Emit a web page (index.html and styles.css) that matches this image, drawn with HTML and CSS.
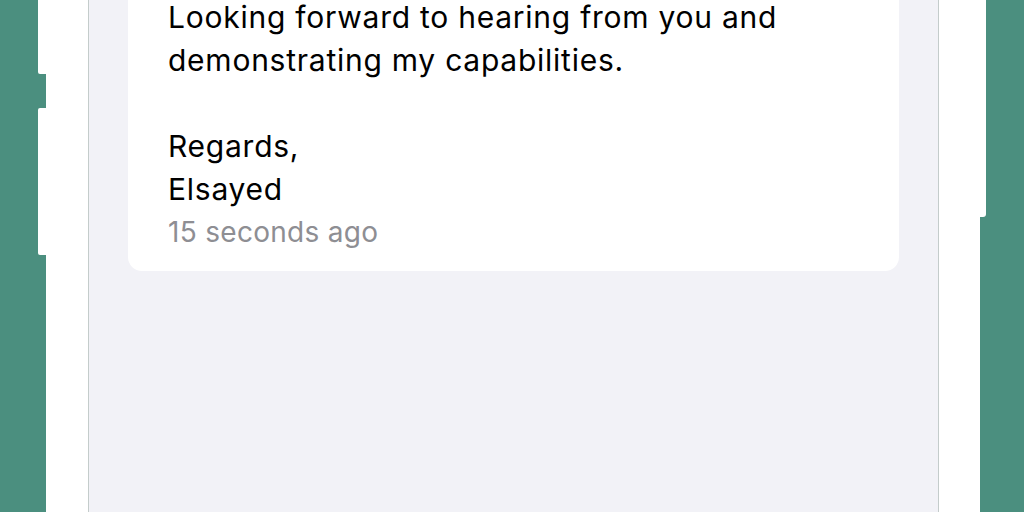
FILE: index.html
```html
<!DOCTYPE html>
<html>
<head>
  <title>Message</title>
  <link rel="stylesheet" href="styles.css">
</head>
<body>
  <div class="edge-left"></div>
  <div class="rail rail-left">
    <div class="seg seg-top"></div>
    <div class="seg seg-gap"></div>
    <div class="seg seg-mid"></div>
  </div>
  <div class="frame">
    <div class="screen">
      <div class="card">
        <p class="line">Looking forward to hearing from you and</p>
        <p class="line">demonstrating my capabilities.</p>
        <p class="line">&nbsp;</p>
        <p class="line">Regards,</p>
        <p class="line">Elsayed</p>
        <p class="line time">15 seconds ago</p>
      </div>
    </div>
  </div>
  <div class="rail rail-right">
    <div class="seg seg-right"></div>
  </div>
  <div class="edge-right"></div>
</body>
</html>
```

FILE: styles.css
```css
body {
  margin: 0;
  height: 512px;
  overflow: hidden;
  background-color: #4b8f7f;
  display: flex;
  font-family: Inter, "Open Sans", sans-serif;
}
.edge-left {
  width: 38px;
  flex: none;
}
.edge-right {
  width: 39px;
  flex: none;
}
.rail {
  display: flex;
  flex-direction: column;
  flex: none;
}
.rail-left {
  width: 8px;
}
.rail-right {
  width: 6px;
}
.seg {
  background-color: #fff;
}
.seg-top {
  height: 74px;
  border-bottom-left-radius: 2px;
}
.seg-gap {
  height: 34px;
  background-color: transparent;
}
.seg-mid {
  height: 147px;
  border-top-left-radius: 2px;
  border-bottom-left-radius: 2px;
}
.seg-right {
  height: 217px;
  border-bottom-right-radius: 3px;
}
.frame {
  width: 851px;
  background-color: #fff;
  padding: 0 41px 0 42px;
  flex: none;
}
.screen {
  display: flow-root;
  height: 100%;
  background-color: #f2f2f7;
  border-left: 1px solid #c4cccb;
  border-right: 1px solid #c4cccb;
  padding: 0 39px;
}
.card {
  background-color: #fff;
  border-radius: 14px;
  margin-top: -40px;
  padding: 36px 40px 17px 40px;
}
.line {
  margin: 0;
  font-size: 30px;
  letter-spacing: 0.75px;
  line-height: 43px;
  color: #000;
  white-space: nowrap;
}
.time {
  font-size: 28px;
  letter-spacing: 0.3px;
  color: #8e8e93;
}
```
